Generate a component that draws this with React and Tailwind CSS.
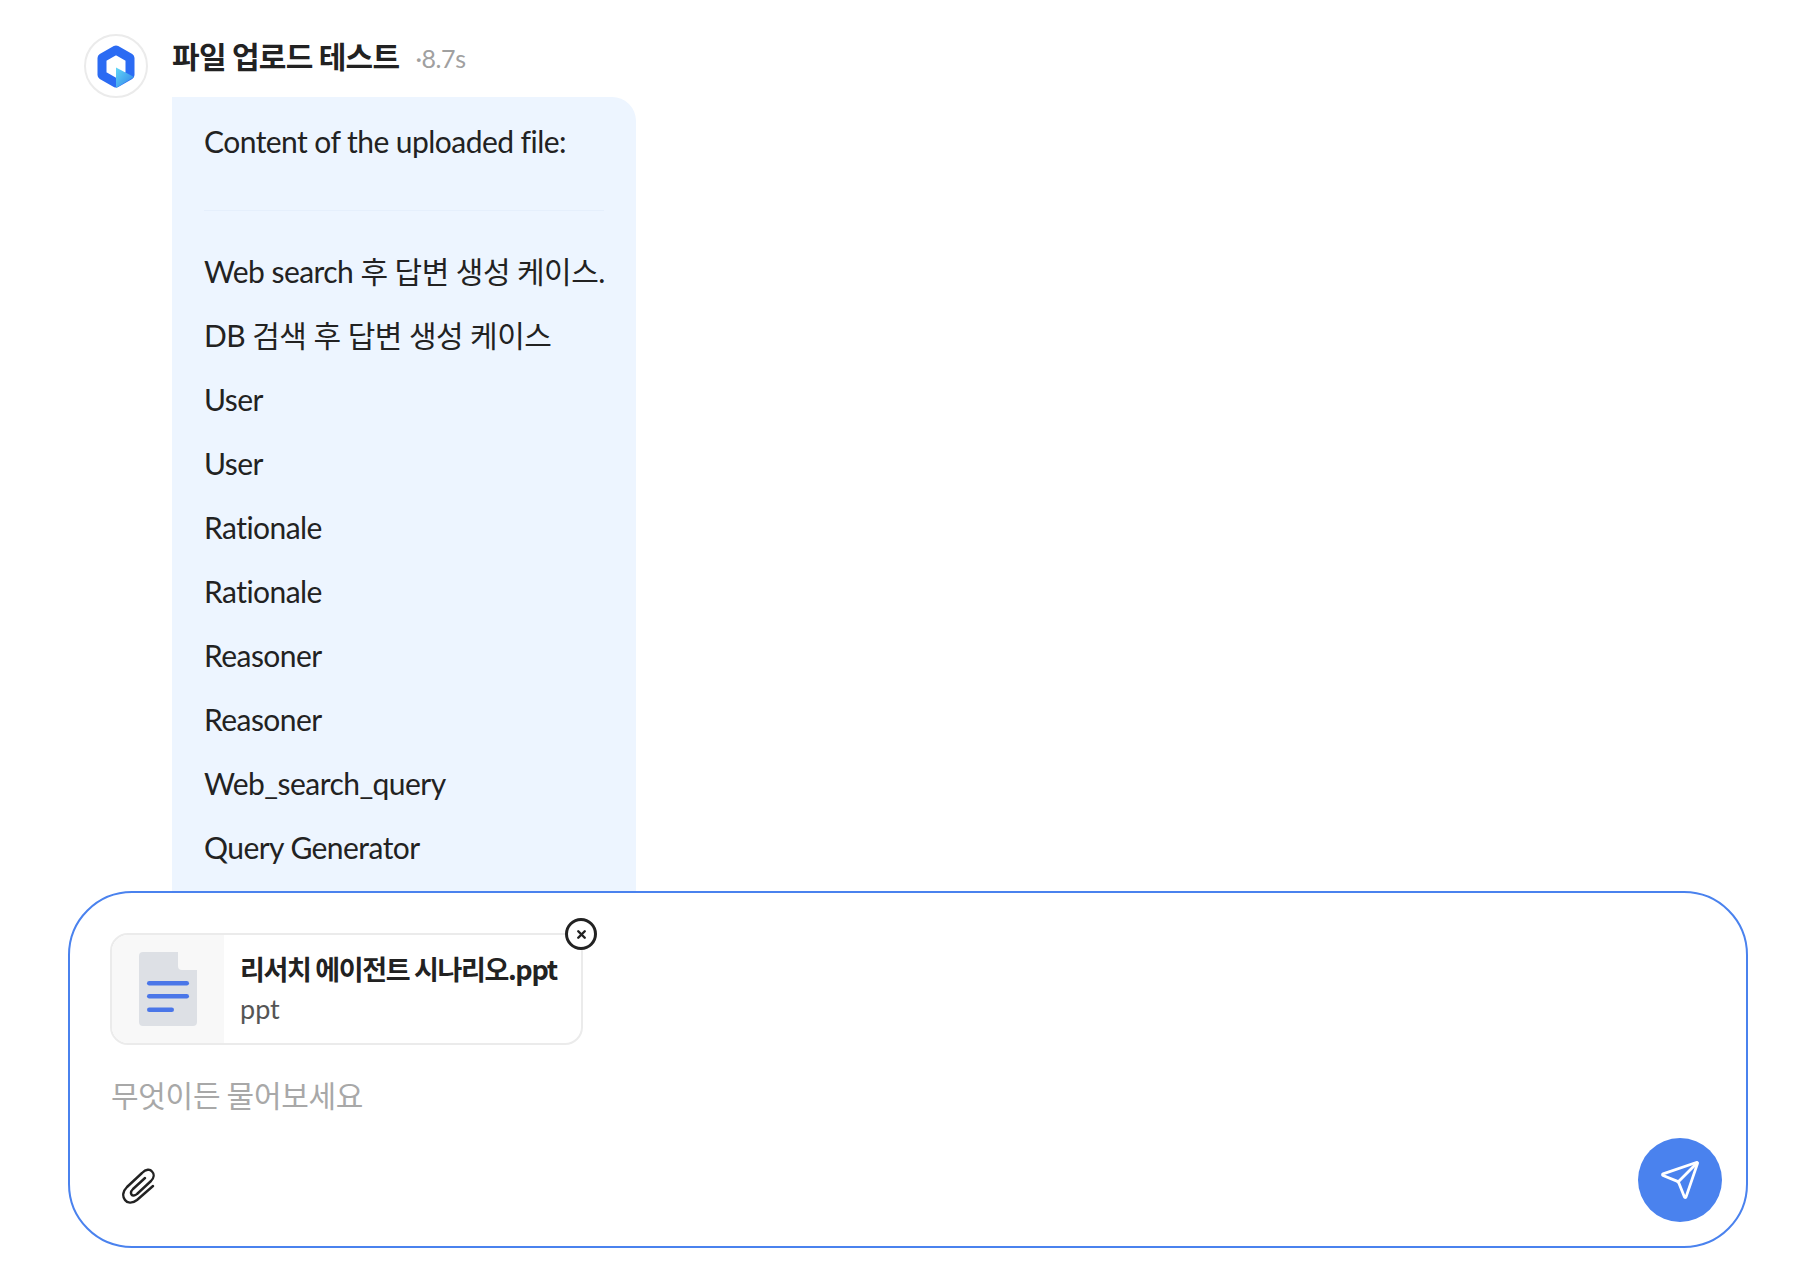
import React from 'react';
import { Send, X } from 'lucide-react';

const LATIN = "font-['Lato','Noto_Sans_CJK_KR',sans-serif]";

const lines = ['Web search 후 답변 생성 케이스.', 'DB 검색 후 답변 생성 케이스', 'User', 'User', 'Rationale', 'Rationale', 'Reasoner', 'Reasoner', 'Web_search_query', 'Query Generator'];

const Logo = () => (
  <svg width="38" height="43" viewBox="0 0 38 43">
    <defs>
      <linearGradient id="play" x1="0" y1="0" x2="1" y2="1">
        <stop offset="0" stopColor="#62d8f7" />
        <stop offset="1" stopColor="#2f7fe8" />
      </linearGradient>
    </defs>
    <path fill="none" stroke="#2b6bf3" strokeWidth="9" strokeLinejoin="round" d="M19 5 L33 13 V30 L19 38 L5 30 V13 Z" />
    <path fill="url(#play)" d="M19 22.5 L37 32 L19 43 Z" />
  </svg>
);

const FileIcon = () => (
  <svg width="58" height="74" viewBox="0 0 58 74">
    <path fill="#dde0e5" d="M4 0 H39 V14 a4 4 0 0 0 4 4 H58 V70 a4 4 0 0 1 -4 4 H4 a4 4 0 0 1 -4 -4 V4 a4 4 0 0 1 4 -4 Z" />
    <rect x="8" y="29" width="42" height="4.5" rx="2.25" fill="#4a76e8" />
    <rect x="8" y="42" width="42" height="4.5" rx="2.25" fill="#4a76e8" />
    <rect x="8" y="55.5" width="27" height="4.5" rx="2.25" fill="#4a76e8" />
  </svg>
);

const Clip = () => (
  <svg width="34" height="36" viewBox="0 0 34 36" fill="none" stroke="#222" strokeWidth="2.4" strokeLinecap="round" strokeLinejoin="round">
    <path d="M31 18 L15 32 C10 36 5 35 3 32 C0 28 1 23 5 19 L20 5 C24 1 28 1 30 3.5 C32.5 6 32 10 29 13 L15 26 C13 28 10.5 28 9.5 26.5 C8.5 25 9 23 11 21 L23 10" />
  </svg>
);

export default function App() {
  return (
    <div className="h-screen flex flex-col bg-white overflow-hidden font-['Noto_Sans_CJK_KR','Noto_Sans',sans-serif] text-[#222]">
      <div className="flex-1 min-h-0 overflow-hidden flex gap-6 pl-[84px] pt-[33px]">
        <div className="mt-[1px] w-16 h-16 shrink-0 rounded-full border-2 border-[#ebebeb] flex items-center justify-center">
          <Logo />
        </div>
        <div className="-mt-[1px]">
          <div className="flex items-baseline gap-4 h-[65px] pt-1">
            <span className="text-[30px] font-bold tracking-[-0.7px] leading-[38px]">파일 업로드 테스트</span>
            <span className={`text-[25px] text-[#a0a0a0] tracking-[-0.4px] ${LATIN}`}>·8.7s</span>
          </div>
          <div className={`w-[464px] min-h-[900px] bg-[#edf5ff] rounded-tr-[24px] px-8 pt-[21px] text-[30px] leading-[64px] tracking-[-0.55px] text-[#222] ${LATIN}`}>
            <p className="leading-[46px]">Content of the uploaded file:</p>
            <hr className="mt-[46px] mb-[28px] border-[#e5effc]" />
            {lines.map((l, i) => (
              <p key={i} className="whitespace-nowrap">{l}</p>
            ))}
          </div>
        </div>
      </div>
      <div className="shrink-0 ml-[68px] mr-[72px] mb-[26px] h-[357px] rounded-[64px] border-2 border-[#4a82ee] px-[40px] pt-[40px] pb-[24px] flex flex-col">
        <div className="relative w-[473px] h-[112px] rounded-[18px] border-2 border-[#ebebeb] flex overflow-visible">
          <div className="w-[112px] bg-[#f8f8f8] rounded-l-[16px] flex items-center justify-center">
            <FileIcon />
          </div>
          <div className="pl-4 flex flex-col justify-center">
            <span className="text-[27px] font-bold tracking-[-1.35px] leading-[40px] whitespace-nowrap">리서치 에이전트 시나리오.ppt</span>
            <span className={`text-[27px] text-[#555] leading-[40px] ${LATIN}`}>ppt</span>
          </div>
          <button className="absolute -top-[17px] -right-[16px] w-8 h-8 rounded-full border-[3px] border-[#222] bg-white flex items-center justify-center">
            <X size={13} strokeWidth={4.5} />
          </button>
        </div>
        <div className="mt-[26px] pl-[1px] text-[30px] leading-[46px] tracking-[-0.3px] text-[#a8a8a8]">무엇이든 물어보세요</div>
        <div className="mt-auto flex items-end justify-between">
          <div className="pl-[12px] pb-[18px]"><Clip /></div>
          <button className="w-[84px] h-[84px] rounded-full bg-[#4a82ee] flex items-center justify-center -mr-[16px]">
            <Send size={42} color="#fff" strokeWidth={1.6} />
          </button>
        </div>
      </div>
    </div>
  );
}
